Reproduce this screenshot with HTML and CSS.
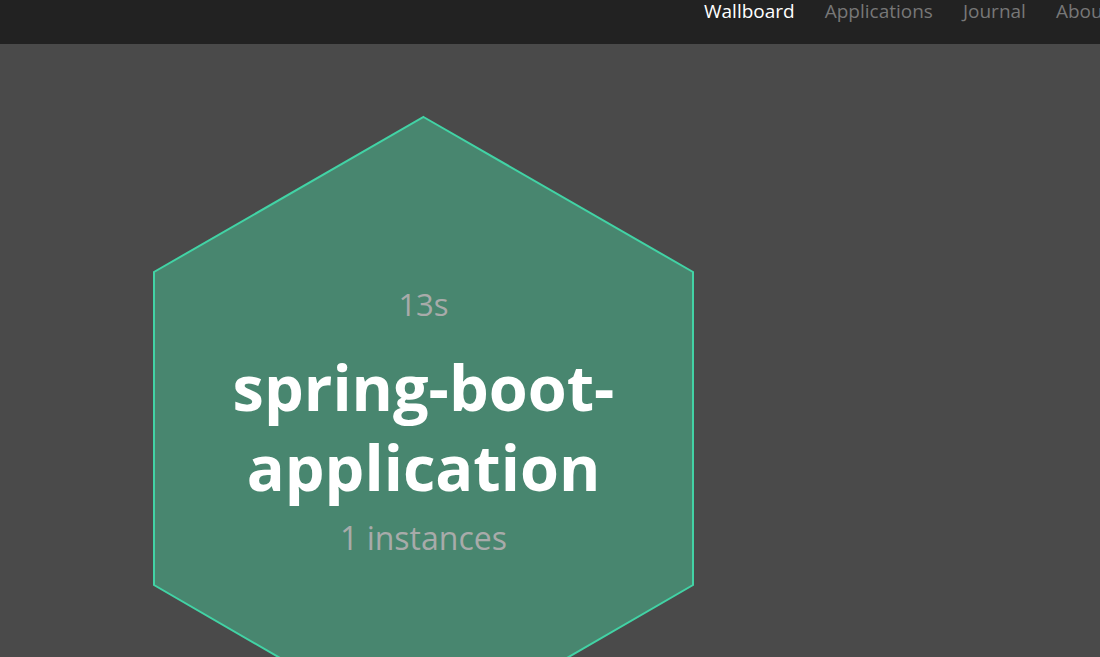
FILE: index.html
```html
<!DOCTYPE html>
<html>
<head>
<meta charset="utf-8">
<link rel="stylesheet" href="styles.css">
</head>
<body>
<header class="navbar">
  <nav class="nav">
    <a class="nav-item active">Wallboard</a>
    <a class="nav-item">Applications</a>
    <a class="nav-item">Journal</a>
    <a class="nav-item">About</a>
  </nav>
</header>
<main class="wallboard">
  <div class="hex">
    <svg class="hex-shape" width="545" height="628" viewBox="0 0 545 628">
      <polygon points="272.5,2 542,157 542,470 272.5,626 3,470 3,157" fill="#48866f" stroke="#42d3a5" stroke-width="2"/>
    </svg>
    <div class="hex-body">
      <div class="hex-time">13s</div>
      <div class="hex-title">spring-boot-<br>application</div>
      <div class="hex-count">1 instances</div>
    </div>
  </div>
</main>
</body>
</html>
```
FILE: styles.css
```css
html, body {
  margin: 0;
  padding: 0;
  background: #4a4a4a;
  overflow: hidden;
  height: 100%;
  font-family: "Open Sans", "Noto Sans", sans-serif;
}
.navbar {
  height: 44px;
  background: #222222;
  display: flex;
  justify-content: flex-start;
  overflow: hidden;
}
.nav {
  display: flex;
  margin-left: 689px;
  white-space: nowrap;
}
.nav-item {
  display: block;
  padding: 0 15px;
  font-size: 19px;
  line-height: 22px;
  color: #777777;
}
.nav-item.active {
  color: #ffffff;
}
.wallboard {
  padding: 71px 0 0 151px;
}
.hex {
  position: relative;
  width: 545px;
  height: 628px;
}
.hex-shape {
  position: absolute;
  left: 0;
  top: 0;
}
.hex-body {
  position: relative;
  display: flex;
  flex-direction: column;
  align-items: center;
  padding-top: 169px;
  text-align: center;
}
.hex-time {
  font-size: 31px;
  line-height: 40px;
  color: #a8abaa;
}
.hex-title {
  margin-top: 23px;
  font-size: 63px;
  font-weight: 700;
  line-height: 80px;
  color: #ffffff;
}
.hex-count {
  margin-top: 10px;
  font-size: 32px;
  line-height: 42px;
  color: #a8abaa;
}
```
